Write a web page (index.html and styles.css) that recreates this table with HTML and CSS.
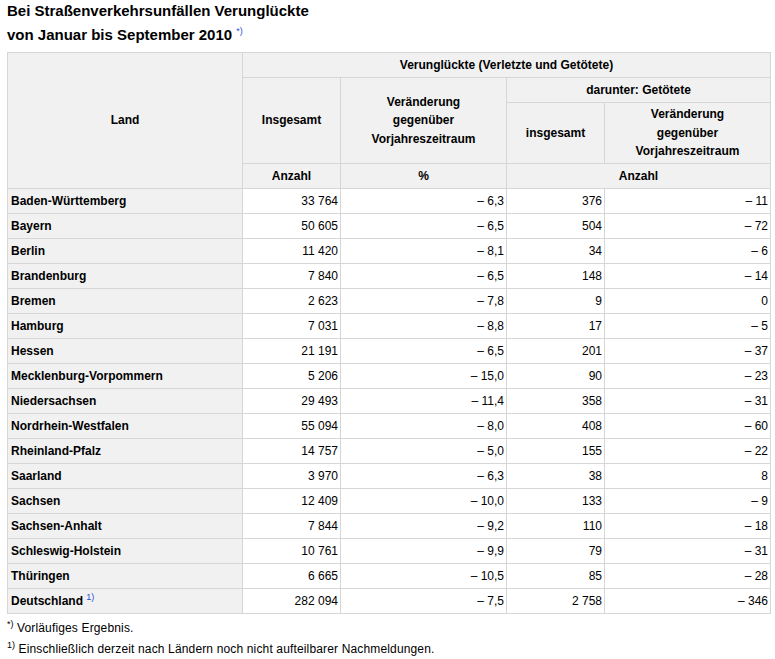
FILE: index.html
```html
<!DOCTYPE html>
<html lang="de">
<head>
<meta charset="utf-8">
<title>Verunglückte</title>
<link rel="stylesheet" href="styles.css">
</head>
<body>
<div class="page">
  <h1 class="title">Bei Straßenverkehrsunfällen Verunglückte<br>von Januar bis September 2010 <sup class="ref">*)</sup></h1>
  <table class="data">
    <colgroup>
      <col class="c-land"><col class="c-num"><col class="c-chg"><col class="c-num"><col class="c-chg">
    </colgroup>
    <thead>
      <tr class="h1">
        <th rowspan="4">Land</th>
        <th colspan="4">Verunglückte (Verletzte und Getötete)</th>
      </tr>
      <tr class="h2">
        <th rowspan="2">Insgesamt</th>
        <th rowspan="2">Veränderung<br>gegenüber<br>Vorjahreszeitraum</th>
        <th colspan="2">darunter: Getötete</th>
      </tr>
      <tr class="h3">
        <th>insgesamt</th>
        <th>Veränderung<br>gegenüber<br>Vorjahreszeitraum</th>
      </tr>
      <tr class="h4">
        <th>Anzahl</th>
        <th>%</th>
        <th colspan="2">Anzahl</th>
      </tr>
    </thead>
    <tbody>
      <tr><th>Baden-Württemberg</th><td>33 764</td><td>– 6,3</td><td>376</td><td>– 11</td></tr>
      <tr><th>Bayern</th><td>50 605</td><td>– 6,5</td><td>504</td><td>– 72</td></tr>
      <tr><th>Berlin</th><td>11 420</td><td>– 8,1</td><td>34</td><td>– 6</td></tr>
      <tr><th>Brandenburg</th><td>7 840</td><td>– 6,5</td><td>148</td><td>– 14</td></tr>
      <tr><th>Bremen</th><td>2 623</td><td>– 7,8</td><td>9</td><td>0</td></tr>
      <tr><th>Hamburg</th><td>7 031</td><td>– 8,8</td><td>17</td><td>– 5</td></tr>
      <tr><th>Hessen</th><td>21 191</td><td>– 6,5</td><td>201</td><td>– 37</td></tr>
      <tr><th>Mecklenburg-Vorpommern</th><td>5 206</td><td>– 15,0</td><td>90</td><td>– 23</td></tr>
      <tr><th>Niedersachsen</th><td>29 493</td><td>– 11,4</td><td>358</td><td>– 31</td></tr>
      <tr><th>Nordrhein-Westfalen</th><td>55 094</td><td>– 8,0</td><td>408</td><td>– 60</td></tr>
      <tr><th>Rheinland-Pfalz</th><td>14 757</td><td>– 5,0</td><td>155</td><td>– 22</td></tr>
      <tr><th>Saarland</th><td>3 970</td><td>– 6,3</td><td>38</td><td>8</td></tr>
      <tr><th>Sachsen</th><td>12 409</td><td>– 10,0</td><td>133</td><td>– 9</td></tr>
      <tr><th>Sachsen-Anhalt</th><td>7 844</td><td>– 9,2</td><td>110</td><td>– 18</td></tr>
      <tr><th>Schleswig-Holstein</th><td>10 761</td><td>– 9,9</td><td>79</td><td>– 31</td></tr>
      <tr><th>Thüringen</th><td>6 665</td><td>– 10,5</td><td>85</td><td>– 28</td></tr>
      <tr><th>Deutschland <sup class="ref">1)</sup></th><td>282 094</td><td>– 7,5</td><td>2 758</td><td>– 346</td></tr>
    </tbody>
  </table>
  <div class="notes">
    <p><sup class="fn">*)</sup> Vorläufiges Ergebnis.</p>
    <p><sup class="fn">1)</sup> Einschließlich derzeit nach Ländern noch nicht aufteilbarer Nachmeldungen.</p>
  </div>
</div>
</body>
</html>
```
FILE: styles.css
```css
html, body {
  margin: 0;
  padding: 0;
  background: #ffffff;
}
body {
  font-family: "Liberation Sans", Arial, sans-serif;
  font-size: 12px;
  color: #000;
}
.page {
  padding: 0 7px;
}
.title {
  font-size: 15px;
  font-weight: bold;
  line-height: 24px;
  height: 48px;
  margin: -1px 0 5px 0;
}
.ref {
  color: #2a4fd0;
  font-size: 9px;
  font-weight: normal;
  vertical-align: 5px;
  line-height: 0;
}
.title .ref {
  vertical-align: 6px;
}
.data {
  border-collapse: collapse;
  table-layout: fixed;
  width: 764px;
}
.c-land { width: 235px; }
.c-num { width: 98px; }
.c-chg { width: 166px; }
.data th, .data td {
  border: 1px solid #d6d6d6;
  padding: 0 3px;
  height: 24px;
  line-height: 18.5px;
  box-sizing: border-box;
}
.data thead th {
  background: #f1f1f1;
  font-weight: bold;
  text-align: center;
  vertical-align: middle;
}
.data tr.h1 th, .data tr.h2 th, .data tr.h4 th { height: 25px; }
.data tr.h3 th { height: 61px; }
.data tbody tr { height: 25px; }
.data tbody th {
  background: #f1f1f1;
  font-weight: bold;
  text-align: left;
  padding-left: 3px;
  height: 25px;
}
.data tbody td {
  background: #ffffff;
  text-align: right;
  padding-right: 2px;
  height: 25px;
}
.notes {
  margin-top: 4px;
  letter-spacing: 0.15px;
}
.notes p {
  margin: 0;
  line-height: 21px;
}
.fn {
  font-size: 9px;
  vertical-align: 5px;
  line-height: 0;
  letter-spacing: 0;
}
```
